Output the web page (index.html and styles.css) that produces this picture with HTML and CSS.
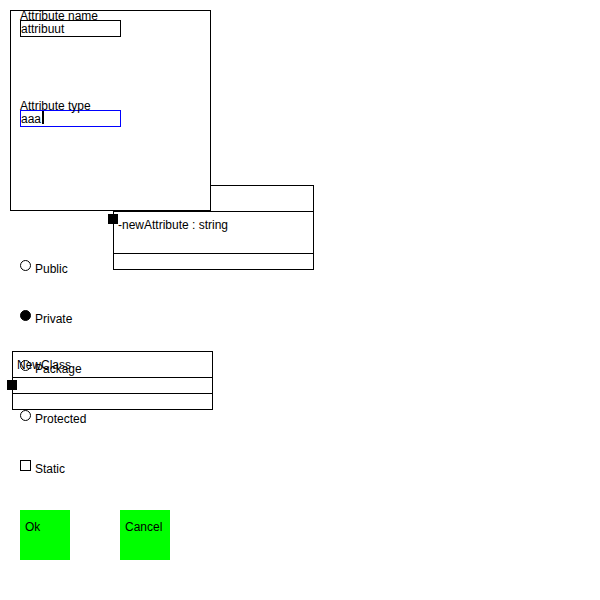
FILE: index.html
```html
<!DOCTYPE html>
<html lang="en">
<head>
<meta charset="utf-8">
<title>Class diagram</title>
<link rel="stylesheet" href="styles.css">
</head>
<body>
<main class="canvas">
  <section class="node node-first">
    <div class="cell title"></div>
    <div class="cell attributes">-newAttribute : string</div>
    <div class="cell"></div>
    <span class="handle"></span>
  </section>
  <section class="node node-second">
    <div class="cell title">NewClass</div>
    <div class="cell"></div>
    <div class="cell"></div>
    <span class="handle"></span>
  </section>
  <form class="dialog">
    <div class="panel">
      <div class="field">
        <label for="attr-name">Attribute name</label>
        <input id="attr-name" type="text" value="attribuut">
      </div>
      <div class="field active">
        <label for="attr-type">Attribute type</label>
        <input id="attr-type" type="text" value="aaa">
        <span class="caret"></span>
      </div>
    </div>
    <div class="options">
      <label class="option"><input type="radio" name="visibility"><span>Public</span></label>
      <label class="option"><input type="radio" name="visibility" checked><span>Private</span></label>
      <label class="option"><input type="radio" name="visibility"><span>Package</span></label>
      <label class="option"><input type="radio" name="visibility"><span>Protected</span></label>
      <label class="option"><input type="checkbox"><span>Static</span></label>
    </div>
    <div class="actions">
      <button type="button">Ok</button>
      <button type="button">Cancel</button>
    </div>
  </form>
</main>
</body>
</html>
```
FILE: styles.css
```css
* {
  box-sizing: border-box;
}

body {
  margin: 0;
  background: #fff;
  color: #000;
  font: 12px/14px "Liberation Sans", Arial, sans-serif;
}

.canvas {
  position: relative;
  min-height: 100vh;
}

/* Class nodes, placed freely on the canvas */
.node {
  position: absolute;
  width: 201px;
  border: 1px solid #000;
}

.node-first {
  left: 113px;
  top: 185px;
}

.node-second {
  left: 12px;
  top: 351px;
}

.cell {
  height: 15px;
  padding-left: 4px;
}

.cell + .cell {
  height: 16px;
  border-top: 1px solid #000;
}

.cell.title {
  height: 25px;
  padding-top: 6px;
}

.cell.attributes {
  height: 42px;
  padding-top: 6px;
}

.handle {
  position: absolute;
  left: -6px;
  top: 28px;
  width: 10px;
  height: 10px;
  background: #000;
}

/* Attribute editor */
.dialog {
  position: relative;
  padding: 10px;
}

.panel {
  width: 201px;
  height: 201px;
  padding: 0 10px;
  background: #fff;
  outline: 1px solid #000;
  outline-offset: -1px;
}

.field {
  position: relative;
  height: 90px;
}

.field label {
  display: block;
  height: 10px;
  line-height: 12px;
}

.field input {
  display: block;
  width: 101px;
  height: 17px;
  margin: 0;
  padding: 1px 0 0;
  border: 1px solid #000;
  border-radius: 0;
  outline: 0;
  background: transparent;
  color: inherit;
  font: inherit;
}

.field.active input {
  border-color: #00f;
}

.caret {
  position: absolute;
  left: 22px;
  top: 11px;
  width: 2px;
  height: 13px;
  background: #000;
}

.options {
  display: flex;
  flex-direction: column;
  align-items: flex-start;
  margin-top: 49px;
  padding-left: 10px;
}

.option {
  display: flex;
  align-items: flex-start;
  gap: 4px;
  height: 50px;
}

.option input {
  appearance: none;
  width: 11px;
  height: 11px;
  margin: 0;
  border: 1px solid #000;
}

.option input[type="radio"] {
  border-radius: 50%;
}

.option input:checked {
  background: #000;
}

.option span {
  padding-top: 2px;
}

.actions {
  display: flex;
  gap: 50px;
  padding-left: 10px;
}

.actions button {
  display: flex;
  align-items: flex-start;
  width: 50px;
  height: 50px;
  padding: 10px 5px;
  border: 0;
  background: #0f0;
  color: inherit;
  font: inherit;
}
```
